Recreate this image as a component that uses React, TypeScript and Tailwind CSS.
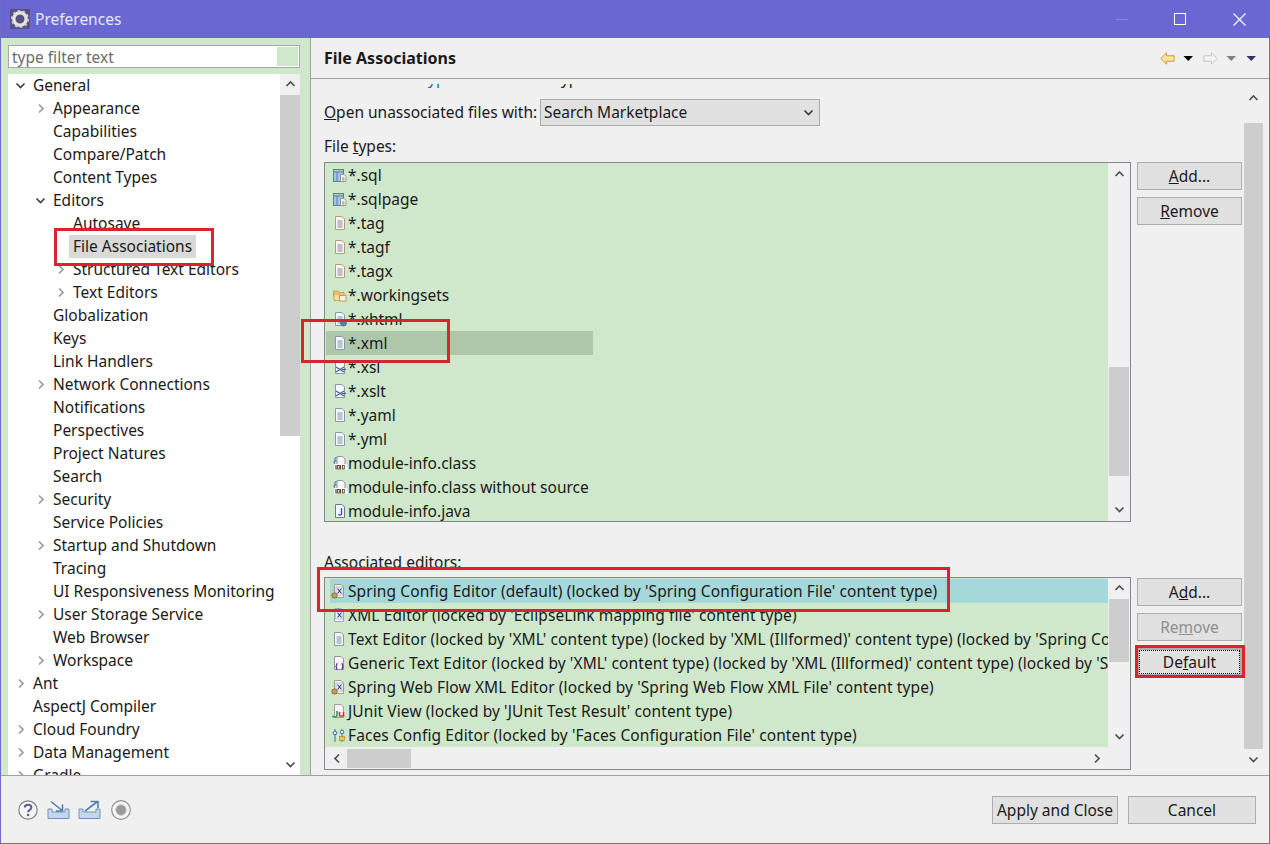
import React from "react";

const F = "[font-family:'Noto_Sans',sans-serif]";

function Chev({ dir, className = "" }: { dir: "up" | "down" | "left" | "right"; className?: string }) {
  const d = { up: "M1.5 7 L5.5 3 L9.5 7", down: "M1.5 3.5 L5.5 7.5 L9.5 3.5", left: "M7 1.5 L3 5.5 L7 9.5", right: "M4 1.5 L8 5.5 L4 9.5" }[dir];
  return (
    <svg width="11" height="11" viewBox="0 0 11 11" className={className}>
      <path d={d} fill="none" stroke="currentColor" strokeWidth="1.7" />
    </svg>
  );
}

function Doc({ children, stroke = "#8a97a8", fill = "#f6f8fb" }: { children?: React.ReactNode; stroke?: string; fill?: string }) {
  return (
    <>
      <path d="M3.5 1.5 H10 L12.5 4 V14.5 H3.5 Z" fill={fill} stroke={stroke} />
      {children}
    </>
  );
}

const Lines = ({ c = "#7d8fa8" }: { c?: string }) => (
  <path d="M5.5 6 H10.5 M5.5 8 H10.5 M5.5 10 H10.5 M5.5 12 H10.5" stroke={c} strokeWidth="1" />
);

function FileIcon({ kind }: { kind: string }) {
  let body: React.ReactNode = null;
  if (kind === "sql")
    body = (
      <>
        <rect x="1.5" y="2.5" width="10" height="12" fill="#a8c4e4" stroke="#4f7fb5" />
        <path d="M1.5 5 H11.5 M5 5 V14" stroke="#4f7fb5" />
        <path d="M8.5 7.5 H12 L14 9.5 V14.5 H8.5 Z" fill="#f4f4ee" stroke="#9a9a88" />
        <path d="M10 11 H12.5 M10 12.8 H12.5" stroke="#8d8d8d" />
      </>
    );
  else if (kind === "tag")
    body = (
      <Doc stroke="#b89a78" fill="#fbf8f2">
        <path d="M5.5 6 H10.5 M5.5 8 H10.5" stroke="#8a7ab8" />
        <path d="M5.5 10 H10.5 M5.5 12 H10.5" stroke="#6f8fb8" />
      </Doc>
    );
  else if (kind === "folder")
    body = (
      <>
        <path d="M1.5 4 H6 L7.5 5.5 H12 V9 H1.5 Z" fill="#f0c77a" stroke="#c99c4e" />
        <path d="M2 7 H8 V13.5 H2 Z" fill="#f7dd9f" stroke="#d0a658" />
        <rect x="7.5" y="8.5" width="6.5" height="5.5" fill="#f8f3e4" stroke="#c99c4e" />
      </>
    );
  else if (kind === "xhtml")
    body = (
      <>
        <Doc>
          <Lines />
        </Doc>
        <circle cx="11.5" cy="12" r="3" fill="#4f86b8" stroke="#33628e" strokeWidth="0.7" />
      </>
    );
  else if (kind === "xml")
    body = (
      <Doc>
        <Lines />
      </Doc>
    );
  else if (kind === "xsl")
    body = (
      <Doc>
        <path d="M4 8 L12 13 M4 13 L12 8" stroke="#46668f" strokeWidth="1.3" />
        <path d="M10 10.5 H14" stroke="#46668f" strokeWidth="1.2" />
      </Doc>
    );
  else if (kind === "class")
    body = (
      <>
        <path d="M5 1.5 H10.5 L13 4 V10 H5 Z" fill="#f6f8fb" stroke="#8a97a8" />
        <path d="M4.5 2.5 C2.5 2.5 2.5 5 3.5 6 C1.5 6 1.5 8 3 8.5" fill="none" stroke="#3e6fa8" strokeWidth="1.1" />
        <rect x="2" y="9" width="13" height="6" fill="#f6f8fb" />
        <path d="M4 10 V14.5 M8.5 10 V14.5" stroke="#5e4a32" strokeWidth="1.2" />
        <rect x="5.5" y="10.5" width="1.8" height="3.5" fill="none" stroke="#5e4a32" strokeWidth="0.9" />
        <rect x="10.5" y="10.5" width="1.8" height="3.5" fill="none" stroke="#5e4a32" strokeWidth="0.9" />
      </>
    );
  else if (kind === "java")
    body = (
      <Doc stroke="#6c7a8c">
        <path d="M9.5 5 V11 C9.5 12.5 7 12.5 6.5 11" fill="none" stroke="#2f5f9e" strokeWidth="1.4" />
      </Doc>
    );
  else if (kind === "spring")
    body = (
      <>
        <Doc stroke="#a89b7d" fill="#f8f5ea">
          <rect x="5" y="4" width="7" height="8" fill="#eef1f8" stroke="#93a0c0" strokeWidth="0.6" />
          <path d="M6.5 5.5 L10.5 10.5 M10.5 5.5 L6.5 10.5" stroke="#33468c" strokeWidth="1.2" />
        </Doc>
        <circle cx="3.5" cy="12.5" r="2.7" fill="#c49a5a" stroke="#8a6530" strokeWidth="0.8" />
      </>
    );
  else if (kind === "xmledit")
    body = (
      <Doc stroke="#a0a8b8">
        <rect x="4.5" y="4" width="7.5" height="8" fill="#eef1f8" stroke="#93a0c0" strokeWidth="0.6" />
        <path d="M6.5 5.5 L10.5 10.5 M10.5 5.5 L6.5 10.5" stroke="#33468c" strokeWidth="1.2" />
      </Doc>
    );
  else if (kind === "generic")
    body = (
      <>
        <Doc stroke="#9a90b0" />
        <path d="M6.5 8.5 C5 8.5 6.2 11.5 4.5 11.5 C6.2 11.5 5 14.5 6.5 14.5 M10.5 8.5 C12 8.5 10.8 11.5 12.5 11.5 C10.8 11.5 12 14.5 10.5 14.5" fill="none" stroke="#6a2f8e" strokeWidth="1.3" />
      </>
    );
  else if (kind === "junit")
    body = (
      <>
        <Doc stroke="#a89a9a" />
        <path d="M6 8 V12 C6 14.5 2.5 14.5 1.5 13" fill="none" stroke="#2f9a55" strokeWidth="1.6" />
        <path d="M8.5 9 V13 H12.5 V9" fill="none" stroke="#c53a3a" strokeWidth="1.6" />
      </>
    );
  else if (kind === "faces")
    body = (
      <>
        <path d="M4 2 V15 M11 2 V15" stroke="#3e6fa8" strokeWidth="1" />
        <circle cx="4" cy="6" r="1.8" fill="#e8f0f8" stroke="#3e6fa8" />
        <circle cx="11" cy="5" r="1.8" fill="#e8f0f8" stroke="#3e6fa8" />
        <rect x="8.5" y="9.5" width="5" height="4" fill="#e8c84e" stroke="#a88a28" strokeWidth="0.7" />
      </>
    );
  return (
    <svg width="16" height="16" viewBox="0 0 16 16" className="shrink-0">
      {body}
    </svg>
  );
}

type TreeRow = [number, "r" | "d" | "", string];
const tree: TreeRow[] = [
  [0, "d", "General"],
  [1, "r", "Appearance"],
  [1, "", "Capabilities"],
  [1, "", "Compare/Patch"],
  [1, "", "Content Types"],
  [1, "d", "Editors"],
  [2, "", "Autosave"],
  [2, "", "File Associations"],
  [2, "r", "Structured Text Editors"],
  [2, "r", "Text Editors"],
  [1, "", "Globalization"],
  [1, "", "Keys"],
  [1, "", "Link Handlers"],
  [1, "r", "Network Connections"],
  [1, "", "Notifications"],
  [1, "", "Perspectives"],
  [1, "", "Project Natures"],
  [1, "", "Search"],
  [1, "r", "Security"],
  [1, "", "Service Policies"],
  [1, "r", "Startup and Shutdown"],
  [1, "", "Tracing"],
  [1, "", "UI Responsiveness Monitoring"],
  [1, "r", "User Storage Service"],
  [1, "", "Web Browser"],
  [1, "r", "Workspace"],
  [0, "r", "Ant"],
  [0, "", "AspectJ Compiler"],
  [0, "r", "Cloud Foundry"],
  [0, "r", "Data Management"],
  [0, "r", "Gradle"],
];

const indents: Record<number, string> = { 0: "pl-[12px]", 1: "pl-[32px]", 2: "pl-[52px]" };

const files: [string, string][] = [
  ["sql", "*.sql"],
  ["sql", "*.sqlpage"],
  ["tag", "*.tag"],
  ["tag", "*.tagf"],
  ["tag", "*.tagx"],
  ["folder", "*.workingsets"],
  ["xhtml", "*.xhtml"],
  ["xml", "*.xml"],
  ["xsl", "*.xsl"],
  ["xsl", "*.xslt"],
  ["xml", "*.yaml"],
  ["xml", "*.yml"],
  ["class", "module-info.class"],
  ["class", "module-info.class without source"],
  ["java", "module-info.java"],
];

const editors: [string, string][] = [
  ["spring", "Spring Config Editor (default) (locked by 'Spring Configuration File' content type)"],
  ["xmledit", "XML Editor (locked by 'EclipseLink mapping file' content type)"],
  ["xml", "Text Editor (locked by 'XML' content type) (locked by 'XML (Illformed)' content type) (locked by 'Spring Configuration File' content type)"],
  ["generic", "Generic Text Editor (locked by 'XML' content type) (locked by 'XML (Illformed)' content type) (locked by 'Spring Configuration File' content type)"],
  ["spring", "Spring Web Flow XML Editor (locked by 'Spring Web Flow XML File' content type)"],
  ["junit", "JUnit View (locked by 'JUnit Test Result' content type)"],
  ["faces", "Faces Config Editor (locked by 'Faces Configuration File' content type)"],
];

function Btn({ children, className = "" }: { children: React.ReactNode; className?: string }) {
  return (
    <div className={`flex h-[28px] w-[105px] items-center justify-center border border-[#adadad] bg-[#e1e1e1] text-[15.5px] text-[#1a1a1a] ${className}`}>
      {children}
    </div>
  );
}

function VScrollBar({ thumbTop, thumbH, arrowH }: { thumbTop: number; thumbH: number; arrowH: number }) {
  return (
    <div className="flex h-full w-[22px] shrink-0 flex-col items-center bg-[#f0f0f0] text-[#505050]">
      <div className="flex shrink-0 items-center justify-center" style={{ height: arrowH }}>
        <Chev dir="up" />
      </div>
      <div className="min-h-0 w-full flex-1 px-px">
        <div className="w-full bg-[#cdcdcd]" style={{ marginTop: thumbTop, height: thumbH }} />
      </div>
      <div className="flex shrink-0 items-center justify-center" style={{ height: arrowH }}>
        <Chev dir="down" />
      </div>
    </div>
  );
}

function ToolDrop({ color }: { color: string }) {
  return (
    <svg width="11" height="7" viewBox="0 0 11 7">
      <path d="M0.5 1 H10 L5.3 6 Z" fill={color} />
    </svg>
  );
}

function Arrow({ fill, stroke, flip = false }: { fill: string; stroke: string; flip?: boolean }) {
  return (
    <svg width="15" height="13" viewBox="0 0 15 13" className={flip ? "scale-x-[-1]" : ""}>
      <path d="M0.8 6.5 L6.5 0.8 V3.8 H14.2 V9.2 H6.5 V12.2 Z" fill={fill} stroke={stroke} strokeWidth="1" />
    </svg>
  );
}

function RedBox({ className }: { className: string }) {
  return <div className={`pointer-events-none absolute border-[3px] border-[#d9232e] ${className}`} />;
}

export default function App() {
  return (
    <div className={`relative flex h-[844px] w-[1270px] flex-col overflow-hidden border-x border-b border-[#6f6cc9] bg-[#f0f0f0] text-[15.5px] leading-[23px] text-[#1a1a1a] ${F}`}>
      {/* Title bar */}
      <div className="-mx-px flex h-[38px] shrink-0 items-center bg-[#6a67d3] pl-[10px] pr-[24px] text-[#e6e6f6]">
        <svg width="20" height="20" viewBox="0 0 20 20" className="shrink-0">
          <rect width="20" height="20" fill="#55527f" />
          <circle cx="10" cy="10" r="6.2" fill="none" stroke="#e4e4e4" strokeWidth="3.4" />
          <circle cx="10" cy="10" r="8" fill="none" stroke="#d0d0d0" strokeWidth="2" strokeDasharray="2.6 2.4" />
        </svg>
        <span className="ml-[5px]">Preferences</span>
        <div className="ml-auto flex items-center">
          <div className="h-px w-[12px] bg-[#8a87de]" />
          <div className="ml-[46px] h-[12px] w-[12px] border border-white" />
          <svg width="13" height="13" viewBox="0 0 13 13" className="ml-[47px]">
            <path d="M0.5 0.5 L12.5 12.5 M12.5 0.5 L0.5 12.5" stroke="#fff" strokeWidth="1.1" />
          </svg>
        </div>
      </div>

      {/* Main */}
      <div className="flex h-[737px] shrink-0">
        {/* Left panel */}
        <div className="flex w-[309px] shrink-0 flex-col bg-[#cfe8cc] pl-[7px] pr-[10px] pt-[7px]">
          <div className="flex h-[23px] shrink-0 items-center border border-[#a8a8a8] bg-white pl-[3px] pr-px">
            <span className="pt-px text-[#6d6d6d]">type filter text</span>
            <div className="ml-auto h-[19px] w-[21px] bg-[#cfe8cc]" />
          </div>
          <div className="mt-[6px] flex min-h-0 flex-1 bg-white">
            <div className="min-w-0 flex-1 overflow-hidden">
              {tree.map(([lvl, ch, label]) => (
                <div key={label} className={`flex h-[23px] items-center ${indents[lvl]}`}>
                  <span className={`flex w-[13px] shrink-0 ${ch === "r" ? "text-[#9a9a9a]" : "text-[#404040]"}`}>
                    {ch === "r" && <Chev dir="right" className="-ml-[5px]" />}
                    {ch === "d" && <Chev dir="down" className="-ml-[5px]" />}
                  </span>
                  <span className={`-ml-[4px] whitespace-nowrap px-[4px] ${label === "File Associations" ? "bg-[#d9d9d9]" : ""}`}>{label}</span>
                </div>
              ))}
            </div>
            <div className="flex h-full w-[20px] shrink-0 flex-col items-center text-[#505050]">
              <div className="flex h-[21px] w-full shrink-0 items-center justify-center bg-[#f0f0f0]">
                <Chev dir="up" />
              </div>
              <div className="h-[341px] w-full shrink-0 bg-[#cdcdcd]" />
              <div className="mt-auto flex h-[21px] w-full shrink-0 items-center justify-center">
                <Chev dir="down" />
              </div>
            </div>
          </div>
        </div>

        {/* Right panel */}
        <div className="flex min-w-0 flex-1 flex-col border-l border-[#a0a0a0]">
          <div className="flex h-[41px] shrink-0 items-center border-b border-[#a0a0a0] pl-[13px] pr-[12px]">
            <span className="pt-px text-[16px] font-bold">File Associations</span>
            <div className="ml-auto flex items-center">
              <Arrow fill="#fbe3a6" stroke="#d99a2b" />
              <span className="ml-[8px] flex"><ToolDrop color="#000" /></span>
              <span className="ml-[9px] flex"><Arrow fill="#f4f4f4" stroke="#c4c4c4" flip /></span>
              <span className="ml-[8px] flex"><ToolDrop color="#808080" /></span>
              <span className="ml-[9px] flex"><ToolDrop color="#3a2f5f" /></span>
            </div>
          </div>

          <div className="flex min-h-0 flex-1">
            {/* Scrolled content */}
            <div className="flex min-w-0 flex-1 flex-col pl-[13px] pt-[5px]">
              <div className="min-h-0 flex-1 overflow-hidden">
                <div className="-mt-[17px] h-[23px] whitespace-nowrap">
                  See <span className="text-[#1a5fb4]">'Content Types'</span> for content-type based file associations.
                </div>
                <div className="mt-[9px] flex h-[27px] items-center">
                  <span className="w-[216px] shrink-0 whitespace-nowrap"><u>O</u>pen unassociated files with:</span>
                  <div className="flex h-[27px] w-[280px] items-center border border-[#adadad] bg-[#e1e1e1] pl-[3px] pr-[5px]">
                    Search Marketplace
                    <span className="ml-auto flex text-[#404040]"><Chev dir="down" /></span>
                  </div>
                </div>
                <div className="mt-[9px] h-[23px]">
                  File <u>t</u>ypes:
                </div>
                <div className="mt-[4px] flex items-start">
                  <div className="flex h-[360px] w-[807px] shrink-0 border border-[#828790] bg-[#cfe8cc]">
                    <div className="min-w-0 flex-1 overflow-hidden pl-px">
                      {files.map(([k, name]) => (
                        <div key={name} className={`flex h-[24px] w-[267px] items-center pl-[6px] ${name === "*.xml" ? "bg-[#aec7ab]" : ""}`}>
                          <FileIcon kind={k} />
                          <span className="whitespace-nowrap">{name}</span>
                        </div>
                      ))}
                    </div>
                    <VScrollBar thumbTop={181} thumbH={109} arrowH={23} />
                  </div>
                  <div className="ml-[6px] flex flex-col gap-[7px]">
                    <Btn><u>A</u>dd...</Btn>
                    <Btn><u>R</u>emove</Btn>
                  </div>
                </div>
                <div className="mt-[29px] h-[23px]">Associated editors:</div>
                <div className="mt-[3px] flex items-start">
                  <div className="flex h-[193px] w-[807px] shrink-0 flex-col border border-[#828790] bg-[#f0f0f0]">
                    <div className="flex min-h-0 flex-1">
                      <div className="min-w-0 flex-1 overflow-hidden bg-[#cfe8cc] pt-px pl-[5px]">
                        {editors.map(([k, text], i) => (
                          <div key={i} className={`flex h-[24px] items-center whitespace-nowrap pl-px tracking-[0.1px] ${i === 0 ? "bg-[#a5d8d8]" : ""}`}>
                            <FileIcon kind={k} />
                            <span className="ml-px">{text}</span>
                          </div>
                        ))}
                      </div>
                      <VScrollBar thumbTop={0} thumbH={63} arrowH={21} />
                    </div>
                    <div className="flex h-[22px] shrink-0 items-center pl-[2px] pr-[28px] text-[#505050]">
                      <span className="flex w-[20px] justify-center"><Chev dir="left" /></span>
                      <div className="h-[19px] w-[64px] bg-[#cdcdcd]" />
                      <span className="ml-auto flex"><Chev dir="right" /></span>
                    </div>
                  </div>
                  <div className="ml-[6px] mt-px flex flex-col gap-[7px]">
                    <Btn>A<u>d</u>d...</Btn>
                    <Btn className="bg-[#cccccc] text-[#8e8e8e]">Re<u>m</u>ove</Btn>
                    <Btn className="border-[2px] border-[#0a5fb4] outline-1 -outline-offset-[3px] outline-dotted outline-black">De<u>f</u>ault</Btn>
                  </div>
                </div>
              </div>
            </div>

            {/* Outer scrollbar */}
            <div className="mr-[6px] w-[19px] shrink-0 pb-[6px] pt-[7px]">
              <div className="flex h-full flex-col items-center text-[#505050]">
                <div className="flex h-[24px] shrink-0 items-center justify-center">
                  <Chev dir="up" />
                </div>
                <div className="mt-[13px] h-[626px] w-full shrink-0 bg-[#cdcdcd]" />
                <div className="flex flex-1 items-center justify-center">
                  <Chev dir="down" />
                </div>
              </div>
            </div>
          </div>
        </div>
      </div>

      {/* Footer */}
      <div className="flex min-h-0 flex-1 items-center border-t border-[#a0a0a0] pl-[17px] pr-[13px] pt-px">
        <div className="flex items-center">
          <svg width="20" height="20" viewBox="0 0 20 20">
            <circle cx="10" cy="10" r="9.2" fill="#f5f5f5" stroke="#7f8490" strokeWidth="1.2" />
            <path d="M6.8 7.5 C6.8 3.8 13.4 3.8 13.4 7.5 C13.4 10 10.1 9.6 10.1 12.2" fill="none" stroke="#5c5f8e" strokeWidth="2" />
            <circle cx="10.1" cy="15" r="1.3" fill="#5c5f8e" />
          </svg>
          <svg width="23" height="20" viewBox="0 0 23 20" className="ml-[9px]">
            <path d="M1 9 H5 V12 H18 V9 H22 V18.5 H1 Z" fill="#c4d6e8" stroke="#6f95bd" />
            <path d="M4 1.5 L14.5 10 M15.5 4.5 V11 H9" fill="none" stroke="#4f80b5" strokeWidth="1.6" />
          </svg>
          <svg width="23" height="20" viewBox="0 0 23 20" className="ml-[8px]">
            <path d="M1 9 H5 V12 H18 V9 H22 V18.5 H1 Z" fill="#c4d6e8" stroke="#6f95bd" />
            <path d="M7 11 L19 2 M12.5 1.5 H20 V8" fill="none" stroke="#4f80b5" strokeWidth="1.6" />
          </svg>
          <svg width="20" height="20" viewBox="0 0 20 20" className="ml-[10px]">
            <circle cx="10" cy="10" r="9.3" fill="#f5f5f5" stroke="#8f8f8f" strokeWidth="1.2" />
            <circle cx="10" cy="10" r="5.2" fill="#9a9a9a" stroke="#bdbdbd" />
          </svg>
        </div>
        <div className="ml-auto flex items-center gap-[10px]">
          <Btn className="w-[126px]">Apply and Close</Btn>
          <Btn className="w-[128px]">Cancel</Btn>
        </div>
      </div>

      {/* Annotations */}
      <RedBox className="left-[53px] top-[228px] h-[38px] w-[160px]" />
      <RedBox className="left-[300px] top-[319px] h-[44px] w-[149px]" />
      <RedBox className="left-[316px] top-[567px] h-[45px] w-[633px]" />
      <RedBox className="left-[1134px] top-[645px] h-[33px] w-[110px]" />
    </div>
  );
}
